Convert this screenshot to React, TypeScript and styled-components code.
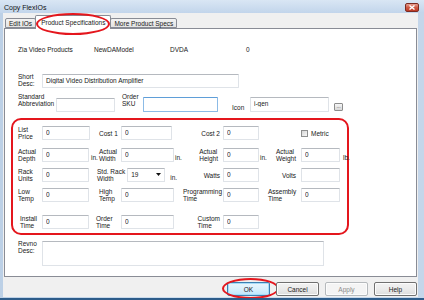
import React from "react";
import styled, { createGlobalStyle } from "styled-components";

const Global = createGlobalStyle`
  html, body { margin: 0; padding: 0; background: #fff; }
  body {
    font-family: "Liberation Sans", Arial, sans-serif;
    font-size: 6.5px;
    color: #202020;
  }
  * { box-sizing: border-box; }
`;

const Window = styled.div`
  width: 424px;
  height: 300px;
  display: flex;
  flex-direction: column;
  background: linear-gradient(90deg, #bcd0e6, #cddded 40%, #c4d6ea);
  border-bottom: 2px solid #2d5c8a;
  overflow: hidden;
`;

const TitleBar = styled.div`
  height: 13px;
  flex: none;
  display: flex;
  align-items: center;
  justify-content: space-between;
  padding: 0 5px 0 4px;
  background: linear-gradient(#d9e6f4, #c2d5eb);
`;

const Title = styled.span`
  font-size: 7px;
  color: #111;
  padding-top: 1px;
`;

const CloseBtn = styled.div`
  width: 14px;
  height: 9px;
  margin-top: 1px;
  border: 1px solid #7b2b22;
  border-radius: 2px;
  background: linear-gradient(#e7a092, #cf5a45 50%, #bd3a25);
  display: flex;
  align-items: center;
  justify-content: center;
`;

const Body = styled.div`
  flex: 1;
  margin: 0 6px 1px 3px;
  background: #f0f0f0;
  display: flex;
  flex-direction: column;
  padding-top: 2px;
`;

const TabStrip = styled.div`
  display: flex;
  align-items: flex-end;
  height: 14px;
  padding-left: 2px;
  flex: none;
`;

const Tab = styled.div<{ $active?: boolean }>`
  position: relative;
  z-index: ${(p) => (p.$active ? 2 : 1)};
  height: ${(p) => (p.$active ? 14 : 10)}px;
  margin-bottom: ${(p) => (p.$active ? 0 : 1)}px;
  padding: 0 ${(p) => (p.$active ? 5 : 3)}px;
  display: flex;
  align-items: center;
  white-space: nowrap;
  border: 1px solid #898c95;
  border-bottom: ${(p) => (p.$active ? "none" : "1px solid #898c95")};
  border-radius: 2px 2px 0 0;
  background: ${(p) =>
    p.$active ? "#fff" : "linear-gradient(#f3f3f3, #e3e3e3)"};
  & + & {
    margin-left: -1px;
  }
`;

const Ring = styled.div<{ $l: number; $t: number; $w: number; $h: number }>`
  position: absolute;
  left: ${(p) => p.$l}px;
  top: ${(p) => p.$t}px;
  width: ${(p) => p.$w}px;
  height: ${(p) => p.$h}px;
  border: 2px solid #e4161d;
  border-radius: 50%;
  pointer-events: none;
`;

const Panel = styled.div`
  height: 249px;
  flex: none;
  margin: -1px 1px 0 1px;
  background: #fff;
  border: 1px solid #898c95;
  display: flex;
  flex-direction: column;
  padding-left: 13px;
`;

const InfoRow = styled.div`
  display: grid;
  grid-template-columns: 76px 76px 76px 76px;
  height: 8px;
  line-height: 8px;
  margin-top: 17px;
`;

const FormRow = styled.div<{ $mt: number; $h: number }>`
  display: flex;
  height: ${(p) => p.$h}px;
  margin-top: ${(p) => p.$mt}px;
`;

const FieldLabel = styled.div<{ $w: number; $ml?: number; $end?: boolean }>`
  width: ${(p) => p.$w}px;
  margin-left: ${(p) => p.$ml ?? 0}px;
  flex: none;
  line-height: 7px;
  white-space: nowrap;
  align-self: ${(p) => (p.$end ? "flex-end" : "flex-start")};
  margin-bottom: ${(p) => (p.$end ? 1 : 0)}px;
`;

const TextBox = styled.input<{ $w?: number; $h?: number; $focus?: boolean; $end?: boolean }>`
  width: ${(p) => (p.$w ? `${p.$w}px` : "100%")};
  height: ${(p) => p.$h ?? 14}px;
  flex: none;
  margin: 0;
  padding: 0 3px 2px;
  font: inherit;
  color: #202020;
  background: #fff;
  outline: none;
  border: 1px solid ${(p) => (p.$focus ? "#8cbbe6" : "#dfe3e8")};
  border-top-color: ${(p) => (p.$focus ? "#5f9ed8" : "#b5b9bf")};
  border-radius: 1px;
  align-self: ${(p) => (p.$end ? "flex-end" : "auto")};
`;

const TextArea = styled.textarea`
  width: 282px;
  height: 25px;
  margin: 1px 0 0 0;
  padding: 2px 3px;
  font: inherit;
  resize: none;
  outline: none;
  background: #fff;
  border: 1px solid #dfe3e8;
  border-top-color: #b5b9bf;
`;

const BrowseBtn = styled.div`
  width: 9px;
  height: 8px;
  margin: 0 0 1px 5px;
  align-self: flex-end;
  flex: none;
  border: 1px solid #8d8d8d;
  border-radius: 1px;
  background: linear-gradient(#f6f6f6, #d8d8d8);
  font-size: 5px;
  line-height: 5px;
  text-align: center;
  color: #333;
`;

const SpecBox = styled.div`
  margin: 6px 0 0 -7px;
  width: 338px;
  height: 117px;
  flex: none;
  border: 2px solid #e4161d;
  border-radius: 10px;
  padding-left: 5px;
`;

const SpecRow = styled.div<{ $mt: number }>`
  display: grid;
  grid-template-columns: 24px 48px 31px 53px 49px 36px 42px 39px 1fr;
  height: 14px;
  margin-top: ${(p) => p.$mt}px;
`;

const Cell = styled.div<{ $span?: number; $pr?: number; $pl?: number }>`
  grid-column: span ${(p) => p.$span ?? 1};
  display: flex;
  align-items: center;
  padding-left: ${(p) => p.$pl ?? 0}px;
  padding-right: ${(p) => p.$pr ?? 0}px;
  line-height: 7px;
  white-space: nowrap;
  min-width: 0;
`;

const Suffix = styled.span<{ $ml?: number }>`
  width: 9px;
  flex: none;
  align-self: flex-end;
  margin-bottom: 1px;
  margin-left: ${(p) => p.$ml ?? 0}px;
  padding-left: 1px;
`;

const Label = styled.span<{ $right?: boolean }>`
  margin-left: ${(p) => (p.$right ? "auto" : "0")};
  text-align: left;
`;

const Select = styled.div`
  width: 38px;
  height: 14px;
  margin-left: 2px;
  flex: none;
  display: flex;
  align-items: center;
  justify-content: space-between;
  padding: 0 3px 1px 3px;
  background: #fff;
  border: 1px solid #dfe3e8;
  border-top-color: #b5b9bf;
`;

const Check = styled.span`
  width: 7px;
  height: 7px;
  flex: none;
  border: 1px solid #8e8f8f;
  background: linear-gradient(135deg, #d6d6d6, #f8f8f8);
  margin-right: 3px;
`;

const ButtonBar = styled.div`
  display: flex;
  justify-content: flex-end;
  gap: 6px;
  padding: 5px 1px 0 0;
`;

const Btn = styled.div<{ $default?: boolean; $disabled?: boolean }>`
  position: relative;
  width: 43px;
  height: 14px;
  display: flex;
  align-items: center;
  justify-content: center;
  border-radius: 2px;
  border: 1px solid
    ${(p) => (p.$default ? "#3c7fb1" : p.$disabled ? "#b5b9bc" : "#707070")};
  background: ${(p) =>
    p.$disabled
      ? "#f4f4f4"
      : p.$default
      ? "linear-gradient(#eaf6fd, #d9f0fc 50%, #bee6fd)"
      : "linear-gradient(#f2f2f2, #ebebeb 50%, #dddddd)"};
  color: ${(p) => (p.$disabled ? "#8a8a8a" : "#1a1a1a")};
  box-shadow: ${(p) => (p.$default ? "inset 0 0 0 1px #a6dcf8" : "inset 0 0 0 1px #fcfcfc")};
`;

function Box({ w, v = "0" }: { w?: number; v?: string }) {
  return <TextBox readOnly defaultValue={v} $w={w} />;
}

export default function App() {
  return (
    <>
      <Global />
      <Window>
        <TitleBar>
          <Title>Copy FlexIOs</Title>
          <CloseBtn>
            <svg width="6" height="5" viewBox="0 0 6 5">
              <path d="M0.5 0.5 L5.5 4.5 M5.5 0.5 L0.5 4.5" stroke="#fff" strokeWidth="1.4" />
            </svg>
          </CloseBtn>
        </TitleBar>
        <Body>
          <TabStrip>
            <Tab>Edit IOs</Tab>
            <Tab $active>
              Product Specifications
              <Ring $l={0} $t={-3} $w={74} $h={22} />
            </Tab>
            <Tab>More Product Specs</Tab>
          </TabStrip>
          <Panel>
            <InfoRow>
              <span>Zia Video Products</span>
              <span>NewDAModel</span>
              <span>DVDA</span>
              <span>0</span>
            </InfoRow>

            <FormRow $mt={19} $h={15}>
              <FieldLabel $w={24}>
                Short
                <br />
                Desc:
              </FieldLabel>
              <TextBox readOnly defaultValue="Digital Video Distribution Amplifier" $w={197} $end />
            </FormRow>

            <FormRow $mt={5} $h={19}>
              <FieldLabel $w={38}>
                Standard
                <br />
                Abbreviation
              </FieldLabel>
              <TextBox readOnly defaultValue="" $w={59} $end />
              <FieldLabel $w={21} $ml={7}>
                Order
                <br />
                SKU
              </FieldLabel>
              <TextBox readOnly defaultValue="" $w={75} $h={15} $focus $end />
              <FieldLabel $w={18} $ml={14} $end>
                Icon
              </FieldLabel>
              <TextBox readOnly defaultValue="i-gen" $w={79} $h={15} $end />
              <BrowseBtn>...</BrowseBtn>
            </FormRow>

            <SpecBox>
              <SpecRow $mt={6}>
                <Cell>List<br />Price</Cell>
                <Cell><Box w={48} /></Cell>
                <Cell><Suffix /><Label>Cost 1</Label></Cell>
                <Cell><Box w={51} /></Cell>
                <Cell $pr={3}><Suffix /><Label $right>Cost 2</Label></Cell>
                <Cell><Box w={36} /></Cell>
                <Cell />
                <Cell $span={2}><Check />Metric</Cell>
              </SpecRow>

              <SpecRow $mt={8}>
                <Cell>Actual<br />Depth</Cell>
                <Cell><Box w={47} /></Cell>
                <Cell><Suffix>in.</Suffix><Label>Actual<br />Width</Label></Cell>
                <Cell><Box w={53} /></Cell>
                <Cell $pr={5}><Suffix>in.</Suffix><Label $right>Actual<br />Height</Label></Cell>
                <Cell><Box w={36} /></Cell>
                <Cell $pr={5}><Suffix>in.</Suffix><Label $right>Actual<br />Weight</Label></Cell>
                <Cell><Box w={39} /></Cell>
                <Cell $pl={2}><Suffix>lb.</Suffix></Cell>
              </SpecRow>

              <SpecRow $mt={6}>
                <Cell>Rack<br />Units</Cell>
                <Cell><Box w={47} /></Cell>
                <Cell $span={2} $pl={7}>
                  <Label>Std. Rack<br />Width</Label>
                  <Select>
                    <span>19</span>
                    <svg width="5" height="3" viewBox="0 0 5 3">
                      <path d="M0 0 H5 L2.5 3 Z" fill="#111" />
                    </svg>
                  </Select>
                  <Suffix $ml={4}>in.</Suffix>
                </Cell>
                <Cell $pr={3}><Suffix /><Label $right>Watts</Label></Cell>
                <Cell><Box w={36} /></Cell>
                <Cell $pr={5}><Suffix /><Label $right>Volts</Label></Cell>
                <Cell><Box w={39} v="" /></Cell>
              </SpecRow>

              <SpecRow $mt={6}>
                <Cell>Low<br />Temp</Cell>
                <Cell><Box w={47} /></Cell>
                <Cell><Suffix /><Label>High<br />Temp</Label></Cell>
                <Cell><Box w={53} /></Cell>
                <Cell $pr={3}><Suffix /><Label $right>Programming<br />Time</Label></Cell>
                <Cell><Box w={36} /></Cell>
                <Cell $pr={5}><Suffix /><Label $right>Assembly<br />Time</Label></Cell>
                <Cell><Box w={39} /></Cell>
              </SpecRow>

              <SpecRow $mt={13}>
                <Cell $pl={2}>Install<br />Time</Cell>
                <Cell><Box w={47} /></Cell>
                <Cell $pl={6}><Label>Order<br />Time</Label></Cell>
                <Cell><Box w={53} /></Cell>
                <Cell $pr={3}><Suffix /><Label $right>Custom<br />Time</Label></Cell>
                <Cell><Box w={36} /></Cell>
              </SpecRow>
            </SpecBox>

            <FormRow $mt={5} $h={26}>
              <FieldLabel $w={24}>
                Revno
                <br />
                Desc:
              </FieldLabel>
              <TextArea readOnly defaultValue="" />
            </FormRow>
          </Panel>
          <ButtonBar>
            <Btn $default>
              OK
              <Ring $l={-6} $t={-5} $w={57} $h={21} />
            </Btn>
            <Btn>Cancel</Btn>
            <Btn $disabled>Apply</Btn>
            <Btn>Help</Btn>
          </ButtonBar>
        </Body>
      </Window>
    </>
  );
}
